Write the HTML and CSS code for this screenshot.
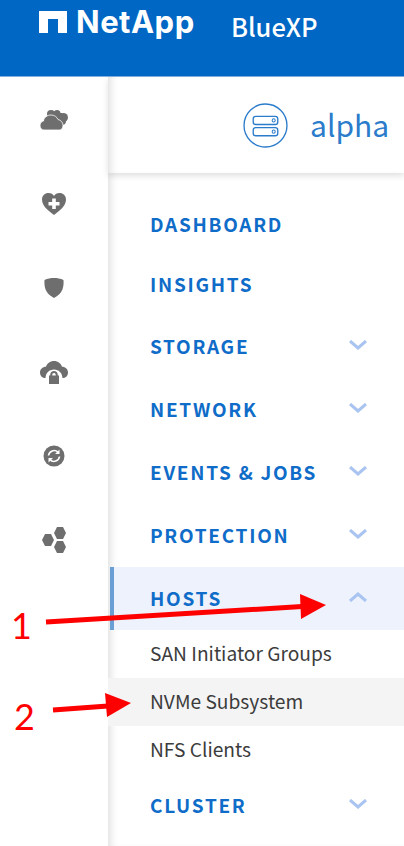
FILE: index.html
```html
<!DOCTYPE html>
<html lang="en">
<head>
  <meta charset="UTF-8" />
  <title>BlueXP - alpha</title>
  <link rel="stylesheet" href="styles.css">
</head>
<body>
  <header class="topbar">
    <div class="brand">
      <svg class="brand-mark" viewBox="0 0 28 22" width="28" height="22"><path d="M0 0H28V22H19V8H9V22H0Z" fill="#fff"/></svg>
      <span class="brand-name">NetApp</span>
    </div>
    <span class="product">BlueXP</span>
  </header>

  <div class="shell">
    <aside class="rail">
      <div class="rail-item">
        <svg viewBox="0 0 28 20" width="28" height="20">
          <g fill="#6e6e6e"><circle cx="11" cy="4" r="4"/><circle cx="17" cy="3.500" r="3.500"/><circle cx="23.500" cy="7.500" r="4.500"/><circle cx="22" cy="11" r="4"/><rect x="10" y="3" width="12" height="8"/></g>
          <path d="M4 20C1.500 20 0 18 0 15.500C0 13 1.500 11.500 3.500 11C4 7.500 7 5 11 5C14.500 5 17 7 18 9.500C20.500 10 23 12 23 15.500C23 18 21.500 20 19.500 20Z" fill="#6e6e6e" stroke="#fff" stroke-width=".8"/>
        </svg>
      </div>
      <div class="rail-item">
        <svg viewBox="0 0 24 22" width="24" height="22"><path d="M12 22C6 17.500 0 13 0 6.500C0 2.500 3 0 6.500 0C9 0 11 1 12 3C13 1 15 0 17.500 0C21 0 24 2.500 24 6.500C24 13 18 17.500 12 22Z" fill="#6e6e6e"/><path d="M10.200 5.500H13.800V9H17.500V12.500H13.800V16H10.200V12.500H6.500V9H10.200Z" fill="#fff"/></svg>
      </div>
      <div class="rail-item">
        <svg viewBox="0 0 20 20" width="20" height="20"><path d="M10 0C13 0 16.500 .6 19.500 2C19.800 8 19.500 15 10 20C.5 15 .2 8 .5 2C3.500 .6 7 0 10 0Z" fill="#6e6e6e"/></svg>
      </div>
      <div class="rail-item">
        <svg viewBox="0 0 28 23" width="28" height="23"><path d="M14 0C18 0 21 2.500 22 5.800C25.500 5.800 28 8.300 28 11.500C28 14.500 26 17 23 17H22.500C22.300 12 18.800 8.500 14 8.500C9.200 8.500 5.700 12 5.500 17H5C2 17 0 14.500 0 11.500C0 8.300 2.500 5.800 6 5.800C7 2.500 10 0 14 0Z" fill="#6e6e6e"/><path d="M9 14.500H10.200V13.800C10.200 11.500 11.800 10 14 10C16.200 10 17.800 11.500 17.800 13.800V14.500H19V23H9ZM12.300 14.500H15.700V13.800C15.700 12.700 15 12 14 12C13 12 12.300 12.700 12.300 13.800Z" fill="#6e6e6e" fill-rule="evenodd"/></svg>
      </div>
      <div class="rail-item">
        <svg viewBox="0 0 22 22" width="22" height="22"><circle cx="11" cy="11" r="10.500" fill="#6e6e6e"/><path d="M5.500 10.500A5.600 5.600 0 0 1 15 7.200" fill="none" stroke="#fff" stroke-width="1.600"/><path d="M16.500 11.500A5.600 5.600 0 0 1 7 14.800" fill="none" stroke="#fff" stroke-width="1.600"/><path d="M16.500 4.500V9H12Z M5.500 17.500V13H10Z" fill="#fff"/></svg>
      </div>
      <div class="rail-item">
        <svg viewBox="0 0 24 26" width="24" height="26"><path d="M15 0H21L24 6L21 12H15L12 6Z M15 14H21L24 20L21 26H15L12 20Z M3 7H9L12 13L9 19H3L0 13Z" fill="#6e6e6e"/></svg>
      </div>
    </aside>

    <main class="main">
      <div class="cluster-head">
        <span class="cluster-icon">
          <svg viewBox="0 0 44 44" width="45" height="45">
            <circle cx="22" cy="22" r="21" fill="none" stroke="#2b7ccb" stroke-width="1.300"/>
            <rect x="10" y="13" width="24" height="8" rx="2.500" fill="none" stroke="#2b7ccb" stroke-width="1.300"/>
            <rect x="10" y="24" width="24" height="8" rx="2.500" fill="none" stroke="#2b7ccb" stroke-width="1.300"/>
            <circle cx="30" cy="17" r="1.500" fill="none" stroke="#2b7ccb"/>
            <circle cx="30" cy="28" r="1.500" fill="none" stroke="#2b7ccb"/>
          </svg>
        </span>
        <span class="cluster-name">alpha</span>
      </div>

      <nav class="nav">
        <a class="nav-row">DASHBOARD</a>
        <a class="nav-row">INSIGHTS</a>
        <a class="nav-row has-sub">STORAGE <svg class="chev" viewBox="0 0 18 10" width="18" height="10"><path d="M1 1L9 8L17 1"/></svg></a>
        <a class="nav-row has-sub">NETWORK <svg class="chev" viewBox="0 0 18 10" width="18" height="10"><path d="M1 1L9 8L17 1"/></svg></a>
        <a class="nav-row has-sub">EVENTS &amp; JOBS <svg class="chev" viewBox="0 0 18 10" width="18" height="10"><path d="M1 1L9 8L17 1"/></svg></a>
        <a class="nav-row has-sub">PROTECTION <svg class="chev" viewBox="0 0 18 10" width="18" height="10"><path d="M1 1L9 8L17 1"/></svg></a>
        <a class="nav-row has-sub open">HOSTS <svg class="chev" viewBox="0 0 18 10" width="18" height="10"><path d="M1 9L9 2L17 9"/></svg></a>
        <a class="sub-row">SAN Initiator Groups</a>
        <a class="sub-row active">NVMe Subsystem</a>
        <a class="sub-row">NFS Clients</a>
        <a class="nav-row has-sub">CLUSTER <svg class="chev" viewBox="0 0 18 10" width="18" height="10"><path d="M1 1L9 8L17 1"/></svg></a>
      </nav>
    </main>
  </div>

  <!-- red callouts drawn on top of the screenshot -->
  <svg class="callouts" viewBox="0 0 404 846" width="404" height="846">
    <path d="M46 622L302 606.500" stroke="#f00" stroke-width="5"/>
    <path d="M300 594L326 605L301 619Z" fill="#f00"/>
    <path d="M53 710L108 706" stroke="#f00" stroke-width="5"/>
    <path d="M105 693L131 703L107 717Z" fill="#f00"/>
  </svg>
  <span class="callout-num one">1</span>
  <span class="callout-num two">2</span>
</body>
</html>
```

FILE: styles.css
```css
* {
  box-sizing: border-box;
}

html, body {
  height: 100%;
}

body {
  margin: 0;
  position: relative;
  overflow: hidden;
  background: #fff;
  font-family: "Noto Sans CJK SC", "Open Sans", sans-serif;
}

.topbar {
  height: 77px;
  background: #0067c5;
  border-bottom: 1px solid #7fb0e0;
  display: flex;
  align-items: flex-start;
  padding: 11px 0 0 39px;
  color: #fff;
}

.brand {
  display: flex;
  align-items: center;
  gap: 9px;
  width: 192px;
  height: 22px;
}

.brand-name {
  font-family: Inter, sans-serif;
  font-weight: 700;
  font-size: 31px;
  line-height: 24px;
  letter-spacing: 0.5px;
}

.product {
  font-size: 25.5px;
  line-height: 29px;
  font-weight: 500;
}

.shell {
  display: flex;
  height: 769px;
}

.rail {
  width: 108px;
  flex: none;
  padding-top: 1px;
  background: #fff;
}

.rail-item {
  height: 84px;
  display: flex;
  align-items: center;
  justify-content: center;
}

.main {
  flex: 1;
  min-width: 0;
  box-shadow: inset 8px 0 8px -6px rgba(0, 0, 0, 0.14);
}

.cluster-head {
  height: 96px;
  display: flex;
  align-items: center;
  padding-left: 135px;
  gap: 22px;
  background: #fff;
  box-shadow: 0 3px 6px rgba(0, 0, 0, 0.12), inset 8px 0 8px -6px rgba(0, 0, 0, 0.14);
}

.cluster-icon {
  display: flex;
}

.cluster-name {
  font-size: 30px;
  line-height: 38px;
  padding-bottom: 2px;
  color: #2b7ccb;
}

.nav {
  padding-top: 22px;
}

.nav-row {
  height: 60px;
  display: flex;
  align-items: center;
  justify-content: space-between;
  padding: 0 37px 2px 42px;
  font-size: 19px;
  font-weight: 700;
  letter-spacing: 1.7px;
  line-height: 24px;
  color: #0f6cc8;
}

.has-sub {
  height: 63px;
}

.open {
  background: #edf2fc;
  border-left: 4px solid #6a9fd6;
  padding-left: 36px;
  margin-left: 2px;
}

.chev {
  margin-bottom: 1px;
  fill: none;
  stroke: #a9c4f0;
  stroke-width: 3;
}

.sub-row {
  height: 48px;
  display: flex;
  align-items: center;
  padding: 0 0 2px 42px;
  font-size: 19.2px;
  line-height: 24px;
  color: #3c3c3c;
}

.active {
  background: #f4f4f4;
}

.callouts {
  position: absolute;
  left: 0;
  top: 0;
}

.callout-num {
  position: absolute;
  font-family: Lato, sans-serif;
  font-size: 36px;
  line-height: 40px;
  color: #f00;
}

.one {
  left: 11px;
  top: 605px;
}

.two {
  left: 14px;
  top: 696px;
}
```
